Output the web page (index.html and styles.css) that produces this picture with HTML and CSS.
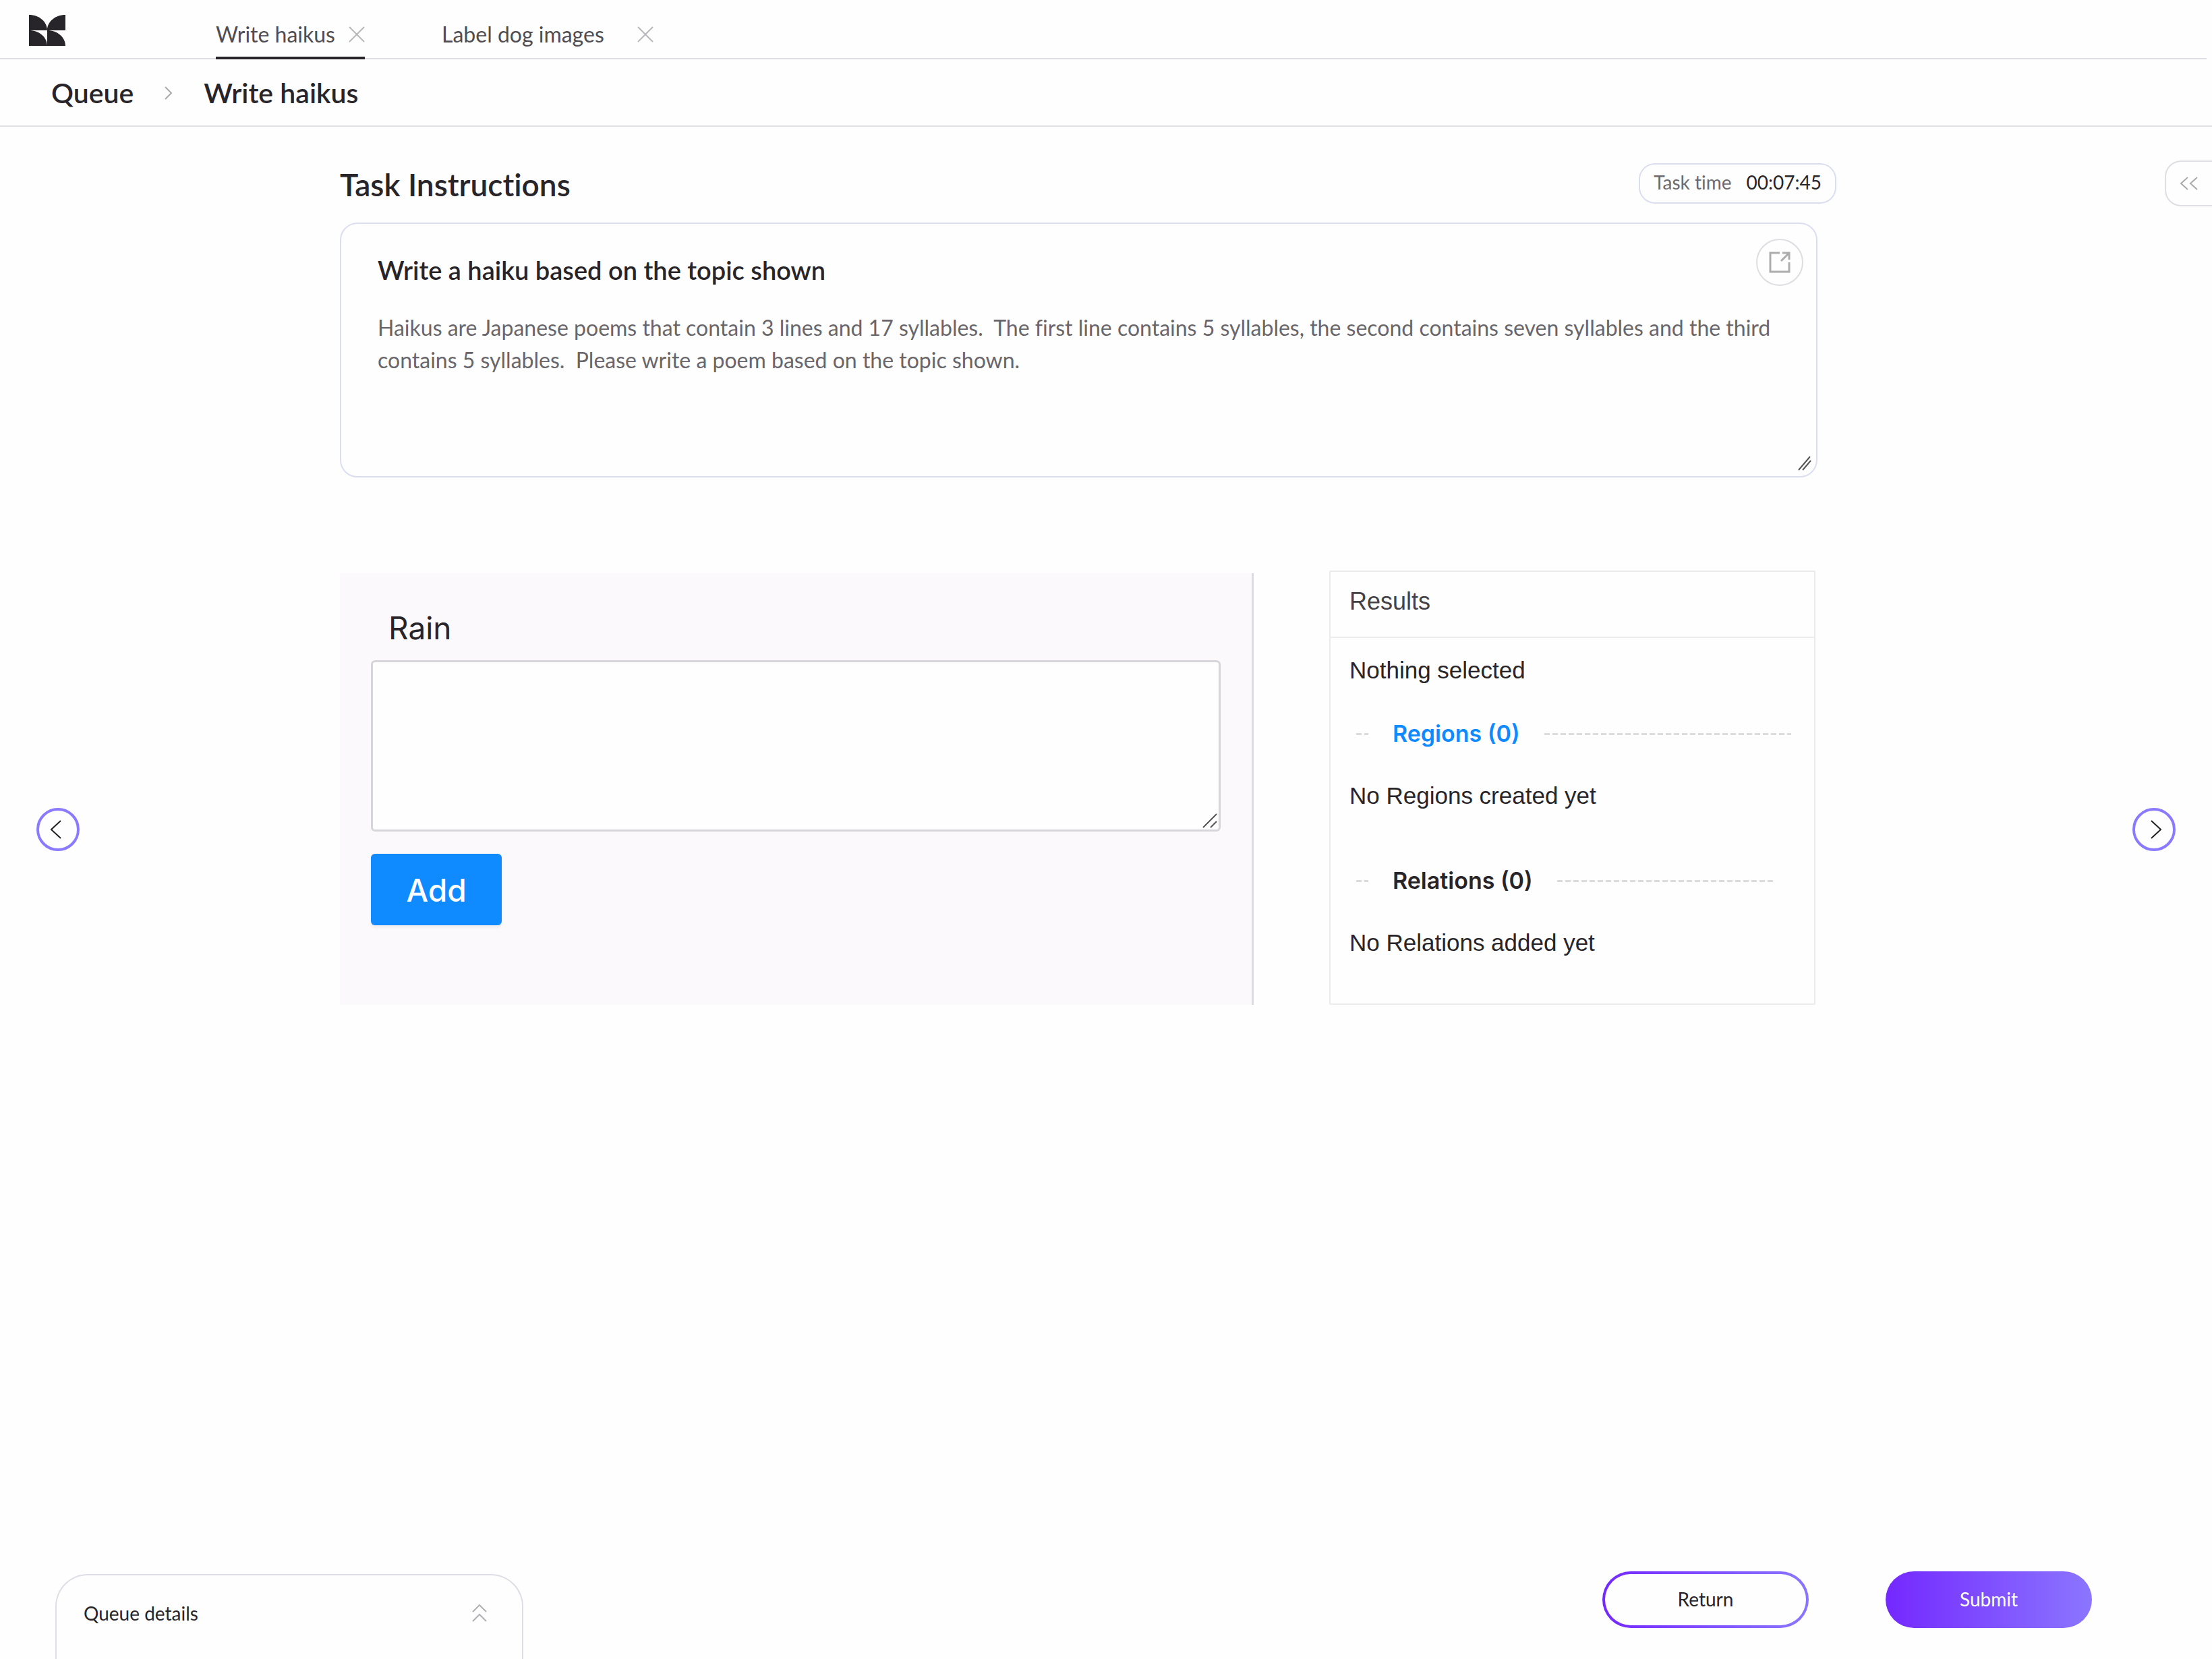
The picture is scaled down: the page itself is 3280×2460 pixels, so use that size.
FILE: index.html
```html
<!DOCTYPE html>
<html lang="en">
<head>
<meta charset="utf-8">
<meta name="viewport" content="width=device-width, initial-scale=1">
<title>Write haikus</title>
<link rel="stylesheet" href="styles.css">
</head>
<body>
<header class="topbar">
  <a class="logo" href="#" aria-label="Home">
    <svg width="54" height="46" viewBox="0 0 54 46" fill="#272529"><path d="M0 0C15 0 27 10 27 23H0ZM54 0C39 0 27 10 27 23H54ZM0 23C15 23 27 33 27 46H0ZM27 23C42 23 54 33 54 46H27Z"/></svg>
  </a>
  <nav class="tabs" aria-label="Open tasks">
    <div class="tab tab-active">
      <a href="#">Write haikus</a>
      <button class="icon-button" aria-label="Close Write haikus"><svg width="24" height="24" viewBox="0 0 24 24"><path d="M1 1L23 23M23 1L1 23"/></svg></button>
    </div>
    <div class="tab tab-wide">
      <a href="#">Label dog images</a>
      <button class="icon-button" aria-label="Close Label dog images"><svg width="24" height="24" viewBox="0 0 24 24"><path d="M1 1L23 23M23 1L1 23"/></svg></button>
    </div>
  </nav>
</header>
<nav class="breadcrumb" aria-label="Breadcrumb">
  <a href="#">Queue</a>
  <svg class="crumb-arrow" width="12" height="20" viewBox="0 0 12 20"><path d="M1 1L10 10L1 19"/></svg>
  <span>Write haikus</span>
</nav>
<div class="stage">
  <button class="round-button previous" aria-label="Previous task"><svg width="56" height="56" viewBox="0 0 56 56"><path d="M32 15L18 28L32 41"/></svg></button>
  <main class="content">
    <div class="heading-row">
      <h1>Task Instructions</h1>
      <p class="timer"><span>Task time</span><time>00:07:45</time></p>
    </div>
    <section class="instructions">
      <h2>Write a haiku based on the topic shown</h2>
      <p>Haikus are Japanese poems that contain 3 lines and 17 syllables.&nbsp; The first line contains 5 syllables, the second contains seven syllables and the third contains 5 syllables.&nbsp; Please write a poem based on the topic shown.</p>
      <button class="open-button" aria-label="Open instructions"><svg width="32" height="32" viewBox="0 0 32 32"><path d="M16 2H2V30H30V16M20 2H30V12M30 2L18 14"/></svg></button>
      <svg class="grip" width="20" height="22" viewBox="0 0 20 22"><path d="M1 21L18 1M7 21L19 7"/></svg>
    </section>
    <div class="workspace">
      <form class="editor">
        <label for="haiku">Rain</label>
        <div class="field">
          <textarea id="haiku"></textarea>
          <svg class="grip grip-field" width="24" height="24" viewBox="0 0 24 24"><path d="M2 22L22 2M13 22L22 13"/></svg>
        </div>
        <button class="add-button" type="button">Add</button>
      </form>
      <section class="results">
        <h3>Results</h3>
        <p>Nothing selected</p>
        <h4 class="regions"><i class="dash dash-short"></i><span>Regions (0)</span><i class="dash"></i></h4>
        <p>No Regions created yet</p>
        <h4 class="relations"><i class="dash dash-short"></i><span>Relations (0)</span><i class="dash"></i></h4>
        <p>No Relations added yet</p>
      </section>
    </div>
  </main>
  <button class="drawer-button" aria-label="Expand side panel"><svg width="28" height="20" viewBox="0 0 28 20"><path d="M12 1L2 10L12 19M26 1L16 10L26 19"/></svg></button>
  <button class="round-button next" aria-label="Next task"><svg width="56" height="56" viewBox="0 0 56 56"><path d="M24 15L38 28L24 41"/></svg></button>
</div>
<footer class="footer">
  <button class="queue-details"><span>Queue details</span><svg width="22" height="26" viewBox="0 0 22 26"><path d="M1 11L11 1L21 11M1 25L11 15L21 25"/></svg></button>
  <div class="actions">
    <button class="action">Return</button>
    <button class="action action-primary">Submit</button>
  </div>
</footer>
</body>
</html>
```
FILE: styles.css
```css
* { box-sizing: border-box; }

body {
  margin: 0;
  min-height: 100vh;
  display: flex;
  flex-direction: column;
  background: #fefefe;
  color: #272529;
  font: 400 32px/48px Lato, sans-serif;
  font-variant-ligatures: none;
}

h1, h2, h3, h4, p { margin: 0; font-weight: 600; }
a { color: inherit; text-decoration: none; }
svg { display: block; fill: none; }
button {
  margin: 0;
  padding: 0;
  border: 0;
  background: none;
  color: inherit;
  font: inherit;
  cursor: pointer;
}

.topbar {
  display: flex;
  height: 88px;
  margin-right: 8px;
  padding-left: 43px;
  background: linear-gradient(#dfdfe5, #dfdfe5) bottom / 100% 2px no-repeat;
}
.logo { width: 277px; padding-top: 22px; }
.logo svg { fill: #272529; }
.tabs { display: flex; gap: 114px; }
.tab {
  display: flex;
  align-items: center;
  justify-content: space-between;
  width: 221px;
  padding-top: 18px;
  border-bottom: 4px solid transparent;
  color: #4f4d52;
}
.tab-active { border-color: #272529; }
.tab-wide { width: 314px; }
.icon-button svg { stroke: #b8b8bc; stroke-width: 2; }

.breadcrumb {
  display: flex;
  align-items: center;
  gap: 46px;
  height: 100px;
  padding: 2px 76px 0;
  border-bottom: 2px solid #dfdfe5;
  font-size: 41px;
  font-weight: 600;
}
.crumb-arrow { stroke: #aaaaae; stroke-width: 2; }

.stage {
  flex: 1;
  display: grid;
  grid-template-columns: 504px 1fr 585px;
}
.round-button {
  align-self: center;
  width: 64px;
  height: 64px;
  border: 4px solid #8a7aff;
  border-radius: 50%;
}
.round-button svg { stroke: #222; stroke-width: 2; }
.previous { grid-area: 1 / 1; margin-left: 54px; }
.next { grid-area: 1 / 3; justify-self: end; margin-right: 54px; }
.drawer-button {
  grid-area: 1 / 3;
  justify-self: end;
  width: 70px;
  height: 68px;
  margin-top: 50px;
  padding-left: 20px;
  border: 2px solid #dedee4;
  border-right: 0;
  border-radius: 24px 0 0 24px;
}
.drawer-button svg { stroke: #aaaaae; stroke-width: 2; }

.content { grid-area: 1 / 2; padding-top: 54px; }
.heading-row {
  display: flex;
  align-items: flex-start;
  justify-content: space-between;
  height: 88px;
  margin-right: -28px;
}
h1 { padding-top: 8px; font-size: 46px; }
.timer {
  display: flex;
  gap: 22px;
  height: 60px;
  padding: 2px 20px 0;
  border: 2px solid #dbdef1;
  border-radius: 24px;
  font-size: 28px;
  font-weight: 400;
}
.timer span { color: #6c6a6f; }

.instructions {
  position: relative;
  min-height: 378px;
  padding: 44px 52px 44px 54px;
  border: 2px solid #dbdef1;
  border-radius: 26px;
}
h2 { margin-bottom: 38px; font-size: 38px; }
.instructions p { color: #68666b; font-weight: 400; }
.open-button {
  position: absolute;
  top: 22px;
  right: 19px;
  display: grid;
  place-items: center;
  width: 70px;
  height: 70px;
  border: 2px solid #dedee2;
  border-radius: 50%;
}
.open-button svg { stroke: #adadad; stroke-width: 3; }
.grip {
  position: absolute;
  right: 7px;
  bottom: 8px;
  stroke: #555;
  stroke-width: 2;
}
.grip-field { right: 4px; bottom: 4px; }

.workspace {
  display: grid;
  grid-template-columns: 1355fr 721fr;
  gap: 112px;
  margin: 138px 3px 0 0;
}
.editor {
  display: flex;
  flex-direction: column;
  align-items: flex-start;
  height: 640px;
  margin-top: 4px;
  padding: 57px 46px 0;
  border-right: 3px solid #dddce0;
  background: #fbf9fc;
  font: 400 46px/48px Inter, sans-serif;
}
.editor label { margin: 0 0 24px 26px; }
.field { position: relative; width: 100%; }
textarea {
  display: block;
  width: 100%;
  height: 254px;
  padding: 16px;
  border: 3px solid #d6d5d9;
  border-radius: 6px;
  background: #fefefe;
  font: inherit;
  resize: none;
}
.add-button {
  width: 194px;
  height: 106px;
  margin-top: 33px;
  padding-top: 2px;
  border-radius: 6px;
  background: #0f8aff;
  box-shadow: 0 4px 4px #0000000c;
  color: #fff;
  font-weight: 500;
}

.results {
  height: 644px;
  border: 2px solid #ebebee;
  border-radius: 2px;
  font: 400 35px/48px "Liberation Sans", sans-serif;
}
.results h3 {
  height: 98px;
  padding: 20px 28px;
  border-bottom: 2px solid #ebebee;
  color: #444246;
  font-size: 36px;
  font-weight: 400;
}
.results p { padding: 0 28px; font-weight: 400; }
.results h3 + p { margin-top: 24px; }
.results h4 {
  display: flex;
  align-items: center;
  gap: 36px;
  margin: 46px 34px 44px 38px;
  font: 600 34px/48px Inter, sans-serif;
}
.results .regions { color: #0f8aff; }
.results .relations { margin: 78px 58px 44px 38px; }
.dash {
  flex: 1;
  height: 3px;
  background: repeating-linear-gradient(90deg, #dcdcde 0 8px, transparent 8px 12px);
}
.dash-short { flex: none; width: 18px; }

.footer {
  display: flex;
  justify-content: space-between;
  height: 188px;
  padding: 58px 178px 0 82px;
  font-size: 28px;
}
.queue-details {
  display: flex;
  align-items: center;
  justify-content: space-between;
  width: 694px;
  margin-top: 4px;
  padding: 0 52px 12px 40px;
  border: 2px solid #dedee6;
  border-bottom: 0;
  border-radius: 48px 48px 0 0;
}
.queue-details svg { stroke: #b0b0b4; stroke-width: 2; }
.actions { display: flex; gap: 114px; }
.action {
  width: 306px;
  height: 84px;
  padding-bottom: 2px;
  border: 4px solid transparent;
  border-radius: 42px;
  background:
    linear-gradient(#fefefe, #fefefe) padding-box,
    linear-gradient(90deg, #7428ff, #8b76ff) border-box;
}
.action-primary {
  background: linear-gradient(90deg, #7428ff, #8b76ff) border-box;
  color: #fff;
}
```
